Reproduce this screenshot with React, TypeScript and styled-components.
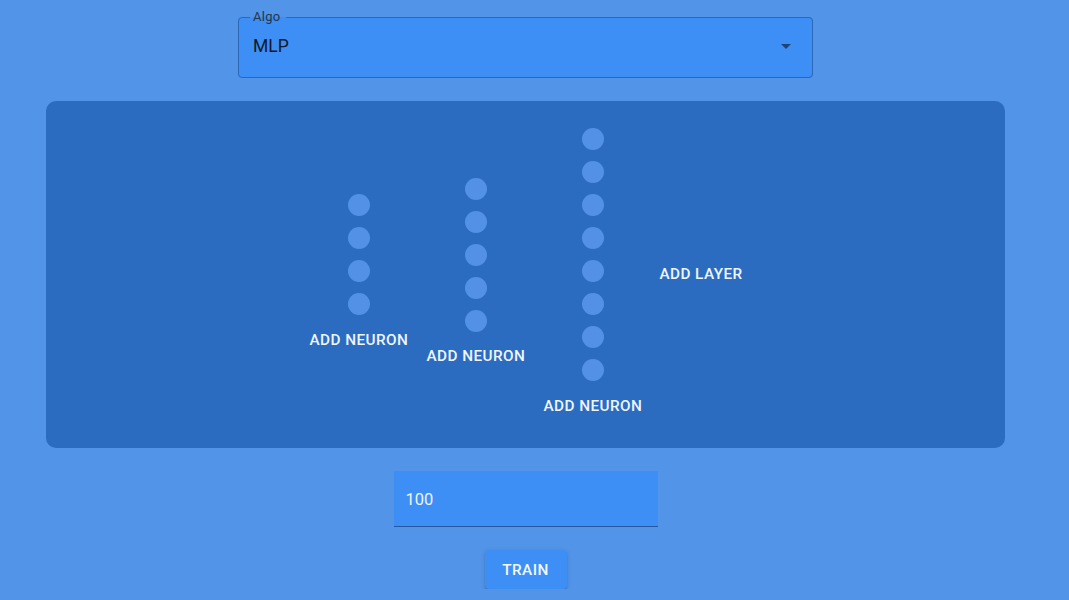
import styled, { createGlobalStyle } from 'styled-components';

const GlobalStyle = createGlobalStyle`
  html, body {
    margin: 0;
    padding: 0;
    background: #5294e8;
    font-family: Roboto, 'Liberation Sans', sans-serif;
  }
`;

const Page = styled.div`
  width: 1051px;
  padding-top: 9px;
  display: flex;
  flex-direction: column;
  align-items: center;
`;

const SelectBox = styled.fieldset`
  box-sizing: border-box;
  width: 575px;
  margin: 0;
  padding: 0 14px 10px 11px;
  border: 1px solid #2c68b8;
  border-radius: 4px;
  background: #3d8ef5;
  min-width: 0;
`;

const SelectLabel = styled.legend`
  font-size: 13px;
  line-height: 16px;
  letter-spacing: 0.3px;
  color: #24364f;
  padding: 0 5px 0 3px;
`;

const SelectRow = styled.div`
  height: 42px;
  padding-left: 3px;
  display: flex;
  align-items: center;
  justify-content: space-between;
`;

const SelectValue = styled.span`
  font-size: 17.5px;
  color: #111827;
`;

const Panel = styled.div`
  box-sizing: border-box;
  width: 959px;
  height: 347px;
  margin-top: 23px;
  padding-bottom: 2px;
  border-radius: 10px;
  background: #2b6cc0;
  display: flex;
  align-items: center;
  justify-content: center;
`;

const Layer = styled.div`
  width: 117px;
  padding-bottom: 1px;
  display: flex;
  flex-direction: column;
  align-items: center;
`;

const Neuron = styled.div`
  width: 22px;
  height: 22px;
  margin: 5.5px 0;
  border-radius: 50%;
  background: #5291e6;
`;

const TextButton = styled.button<{ $raised?: boolean }>`
  height: 36px;
  margin-top: ${({ $raised }) => ($raised ? '0' : '1px')};
  padding: 0 8px;
  border: none;
  background: transparent;
  color: #f0f5fd;
  font-family: Roboto, 'Liberation Sans', sans-serif;
  font-size: 15.3px;
  font-weight: 500;
  letter-spacing: 0.44px;
  text-transform: uppercase;
  white-space: nowrap;
  cursor: pointer;
`;

const EpochField = styled.div`
  box-sizing: border-box;
  width: 264px;
  height: 56px;
  margin-top: 23px;
  padding: 2px 12px 0;
  background: #3d8ef5;
  border-bottom: 1px solid #2557a0;
  display: flex;
  align-items: center;
  font-size: 16.5px;
  color: #eef4fd;
`;

const TrainButton = styled.button`
  margin-top: 23px;
  width: 82px;
  height: 39px;
  border: none;
  border-radius: 4px;
  background: #3d8ef5;
  color: #f2f7ff;
  font-family: Roboto, 'Liberation Sans', sans-serif;
  font-size: 15.3px;
  font-weight: 500;
  letter-spacing: 0.44px;
  box-shadow: 0 3px 1px -2px rgba(0, 0, 0, 0.2), 0 2px 2px 0 rgba(0, 0, 0, 0.14),
    0 1px 5px 0 rgba(0, 0, 0, 0.12);
`;

const layers = [4, 5, 8];

export default function App() {
  return (
    <>
      <GlobalStyle />
      <Page>
        <SelectBox>
          <SelectLabel>Algo</SelectLabel>
          <SelectRow>
            <SelectValue>MLP</SelectValue>
            <svg width="24" height="24" viewBox="0 0 24 24">
              <path d="M7 10l5 5 5-5z" fill="rgba(20,35,60,0.7)" />
            </svg>
          </SelectRow>
        </SelectBox>
        <Panel>
          {layers.map((count, i) => (
            <Layer key={i}>
              {Array.from({ length: count }).map((_, j) => (
                <Neuron key={j} />
              ))}
              <TextButton>Add neuron</TextButton>
            </Layer>
          ))}
          <TextButton $raised>Add layer</TextButton>
        </Panel>
        <EpochField>100</EpochField>
        <TrainButton>TRAIN</TrainButton>
      </Page>
    </>
  );
}
